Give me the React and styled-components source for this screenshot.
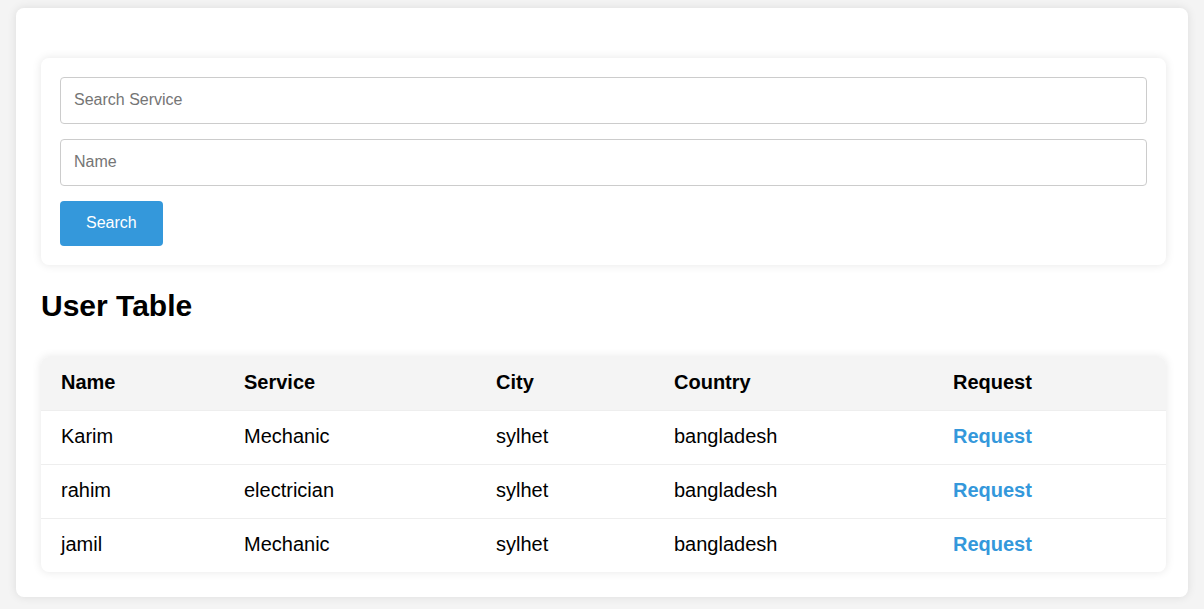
import React from 'react';
import styled, { createGlobalStyle } from 'styled-components';

const GlobalStyle = createGlobalStyle`
  * {
    box-sizing: border-box;
  }

  body {
    margin: 0;
    padding: 8px 16px;
    background: #f4f4f4;
    font-family: "Liberation Sans", Arial, sans-serif;
    color: #000;
  }
`;

const users = [
  { name: 'Karim', service: 'Mechanic', city: 'sylhet', country: 'bangladesh' },
  { name: 'rahim', service: 'electrician', city: 'sylhet', country: 'bangladesh' },
  { name: 'jamil', service: 'Mechanic', city: 'sylhet', country: 'bangladesh' },
];

const columns = [
  { label: 'Name', width: 183 },
  { label: 'Service', width: 252 },
  { label: 'City', width: 178 },
  { label: 'Country', width: 279 },
  { label: 'Request' },
];

export default function App() {
  return (
    <>
      <GlobalStyle />
      <Container>
        <SearchBox>
          <Input type="text" placeholder="Search Service" />
          <Input type="text" placeholder="Name" />
          <Button type="button">Search</Button>
        </SearchBox>

        <Title>User Table</Title>

        <Table>
          <thead>
            <tr>
              {columns.map((col) => (
                <Th key={col.label} style={col.width ? { width: col.width } : undefined}>
                  {col.label}
                </Th>
              ))}
            </tr>
          </thead>
          <tbody>
            {users.map((user, index) => (
              <Row key={index}>
                <Td>{user.name}</Td>
                <Td>{user.service}</Td>
                <Td>{user.city}</Td>
                <Td>{user.country}</Td>
                <Td>
                  <RequestLink href="#">Request</RequestLink>
                </Td>
              </Row>
            ))}
          </tbody>
        </Table>
      </Container>
    </>
  );
}

const Container = styled.div`
  background: #fff;
  border-radius: 8px;
  box-shadow: 0 0 10px rgba(0, 0, 0, 0.1);
  padding: 50px 22px 25px 25px;
`;

const SearchBox = styled.div`
  display: flex;
  flex-direction: column;
  align-items: flex-start;
  gap: 15px;
  background: #fff;
  border-radius: 8px;
  box-shadow: 0 0 10px rgba(0, 0, 0, 0.1);
  padding: 19px;
`;

const Input = styled.input`
  width: 100%;
  height: 47px;
  padding: 0 13px 2px;
  border: 1px solid #ccc;
  border-radius: 4px;
  font-family: inherit;
  font-size: 16px;
  color: #333;

  &::placeholder {
    color: #757575;
  }
`;

const Button = styled.button`
  height: 45px;
  padding: 0 26px 1px;
  border: none;
  border-radius: 4px;
  background: #3498db;
  color: #fff;
  font-family: inherit;
  font-size: 16px;
  cursor: pointer;
`;

const Title = styled.h2`
  margin: 24px 0 34px;
  font-size: 30px;
  line-height: 34px;
  font-weight: bold;
`;

const Table = styled.table`
  width: 100%;
  border-collapse: collapse;
  table-layout: fixed;
  background: #fff;
  border-radius: 8px;
  overflow: hidden;
  box-shadow: 0 0 10px rgba(0, 0, 0, 0.1);
  font-size: 20px;
`;

const Th = styled.th`
  padding: 14px 20px 16px;
  text-align: left;
  font-weight: bold;
  line-height: 23px;
  background: #f4f4f4;
  border-bottom: 1px solid #eee;
`;

const Row = styled.tr`
  &:not(:last-child) td {
    border-bottom: 1px solid #eee;
  }
`;

const Td = styled.td`
  padding: 14px 20px 16px;
  line-height: 23px;
`;

const RequestLink = styled.a`
  color: #3498db;
  font-weight: bold;
  text-decoration: none;
`;
